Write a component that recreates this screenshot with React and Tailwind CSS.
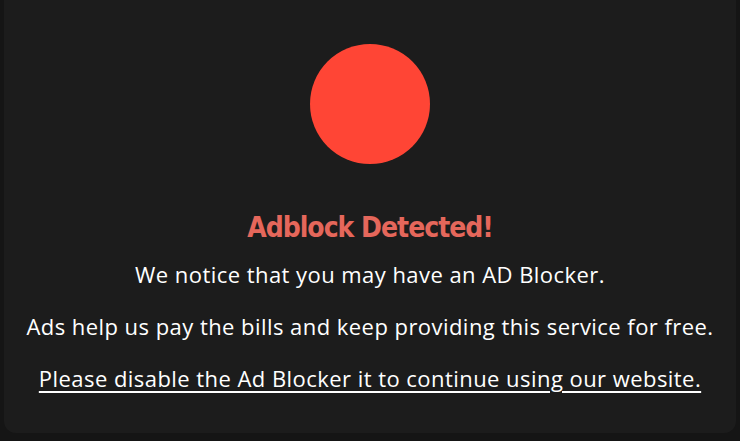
export default function App() {
  return (
    <div className="w-[740px] h-[441px] bg-[#151515] overflow-hidden">
      <div className="mx-[4px] h-[433px] bg-[#1c1c1c] rounded-b-[12px] flex flex-col items-center">
        <div className="mt-[44px] w-[120px] h-[120px] rounded-full bg-[#ff4535]" />
        <h2 className="mt-[46px] text-[28px] leading-[36px] font-bold text-[#e5675b] tracking-[-1px]" style={{ fontFamily: '"DejaVu Sans Condensed", "Liberation Sans Narrow", sans-serif' }}>
          Adblock Detected!
        </h2>
        <div className="mt-[13px] flex flex-col items-center gap-[22px] text-[22px] leading-[30px] tracking-[0.45px] text-white font-['Open_Sans',sans-serif]">
          <p>We notice that you may have an AD Blocker.</p>
          <p>Ads help us pay the bills and keep providing this service for free.</p>
          <p className="underline underline-offset-[4px]">Please disable the Ad Blocker it to continue using our website.</p>
        </div>
      </div>
    </div>
  );
}
